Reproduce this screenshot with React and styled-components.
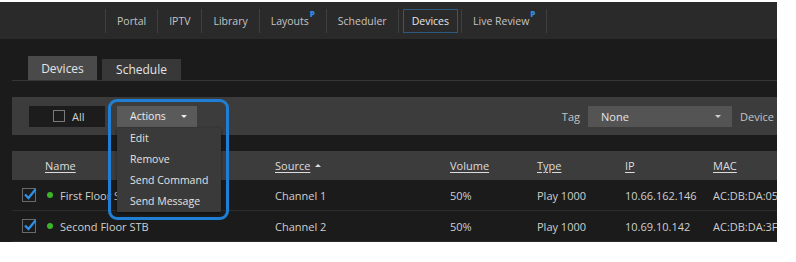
import styled, { createGlobalStyle } from 'styled-components'

const Global = createGlobalStyle`
  body {
    margin: 0;
    background: #ffffff;
    font-family: "Open Sans", "Liberation Sans", sans-serif;
  }
`

const Frame = styled.div`
  width: 777px;
  height: 240px;
  margin-top: 2px;
  background: #1b1b1b;
  overflow: hidden;
  color: #d0d0d0;
  font-size: 11px;
`

const NavBar = styled.div`
  height: 37px;
  background: #2a2a2a;
  display: flex;
  align-items: center;
  padding-left: 105px;
  font-size: 10.5px;
`

const NavItem = styled.div`
  height: 24px;
  display: flex;
  align-items: center;
  padding: 0 11px 0 11px;
  border-left: 1px solid #404040;
  color: ${p => (p.$active ? '#e6e6e6' : '#c4c4c4')};
  &:last-child {
    border-right: 1px solid #404040;
  }
`

const ActiveBox = styled.span`
  display: flex;
  align-items: center;
  height: 22px;
  padding: 0 8px;
  margin: 0 -8px 0 -7px;
  border: 1px solid #2f5a80;
`

const Sup = styled.sup`
  color: #2f8de4;
  font-size: 8px;
  font-weight: 800;
  margin-left: 1px;
  align-self: flex-start;
  margin-top: 1px;
  line-height: 8px;
`

const Content = styled.div`
  padding: 17px 0 0 12px;
`

const Tabs = styled.div`
  display: flex;
  align-items: flex-end;
  gap: 5px;
  height: 24px;
  padding-left: 16px;
  border-bottom: 1px solid #363636;
`

const Tab = styled.div`
  height: ${p => (p.$active ? 24 : 21)}px;
  width: ${p => p.$w}px;
  display: flex;
  align-items: center;
  justify-content: center;
  font-size: 12px;
  background: ${p => (p.$active ? '#4a4a4a' : '#383838')};
  color: #e4e4e4;
`

const Toolbar = styled.div`
  margin-top: 16px;
  height: 38px;
  background: #3c3c3c;
  display: flex;
  align-items: center;
  padding-left: 17px;
`

const AllBox = styled.div`
  width: 76px;
  height: 21px;
  background: #1c1c1c;
  display: flex;
  align-items: center;
  padding-left: 24px;
  box-sizing: border-box;
  gap: 7px;
`

const EmptyCheck = styled.span`
  width: 10px;
  height: 10px;
  border: 1px solid #7a7a7a;
`

const ActionsWrap = styled.div`
  position: relative;
  margin-left: 12px;
  font-size: 10.5px;
`

const ActionsButton = styled.div`
  width: 80px;
  height: 21px;
  background: #5a5a5a;
  color: #ececec;
  display: flex;
  align-items: center;
  padding-left: 13px;
  box-sizing: border-box;
  gap: 15px;
`

const Caret = styled.span`
  width: 0;
  height: 0;
  border-left: 3px solid transparent;
  border-right: 3px solid transparent;
  border-${p => (p.$up ? 'bottom' : 'top')}: 3px solid ${p => p.$color || '#eeeeee'};
`

const Menu = styled.div`
  position: absolute;
  top: 22px;
  left: 0;
  width: 104px;
  height: 84px;
  background: #3a3a3a;
  box-shadow: 0 1px 3px rgba(0, 0, 0, 0.5);
  z-index: 2;
`

const MenuItem = styled.div`
  height: 21px;
  display: flex;
  align-items: center;
  padding-left: 13px;
  color: #e2e2e2;
`

const Highlight = styled.div`
  position: absolute;
  left: -9px;
  top: -7px;
  width: 121px;
  height: 121px;
  box-sizing: border-box;
  border: 3px solid #1f7fd4;
  border-radius: 9px;
  z-index: 3;
  pointer-events: none;
`

const Spacer = styled.div`
  flex: 1;
`

const Label = styled.span`
  color: #c4c4c4;
  margin-right: 8px;
`

const Select = styled.div`
  width: 144px;
  height: 21px;
  background: #545454;
  display: flex;
  align-items: center;
  justify-content: space-between;
  padding: 0 11px 0 13px;
  box-sizing: border-box;
  color: #e4e4e4;
  margin-right: 8px;
`

const DeviceLabel = styled.span`
  color: #c4c4c4;
  white-space: nowrap;
  width: 37px;
  overflow: hidden;
`

const Table = styled.div`
  margin-top: 16px;
`

const Grid = styled.div`
  display: grid;
  grid-template-columns: 263px 175px 87px 88px 88px 1fr;
  align-items: center;
  box-sizing: border-box;
  height: ${p => p.$h}px;
  background: ${p => (p.$head ? '#3c3c3c' : '#1b1b1b')};
  border-bottom: ${p => (p.$head ? 'none' : '1px solid #2c2c2c')};
  white-space: nowrap;
  overflow: hidden;
`

const HeadCell = styled.div`
  color: #dcdcdc;
  padding-left: ${p => p.$pad || 0}px;
  display: flex;
  align-items: center;
  gap: 5px;
  & > u {
    text-underline-offset: 2px;
  }
`

const Cell = styled.div`
  color: #cfcfcf;
  display: flex;
  align-items: center;
  padding-left: ${p => p.$pad || 0}px;
`

const Check = styled.span`
  position: relative;
  width: 12px;
  height: 12px;
  border: 1px solid #6a6a6a;
  margin-right: 11px;
`

const Dot = styled.span`
  width: 6px;
  height: 6px;
  border-radius: 50%;
  background: #3cb428;
  margin-right: 7px;
`

const Tick = () => (
  <svg width="14" height="14" viewBox="0 0 14 14" style={{ position: 'absolute', left: 0, top: -2 }}>
    <path d="M2 7.5 L5.5 11 L12.5 2.5" fill="none" stroke="#2e8ee6" strokeWidth="2.4" />
  </svg>
)

const rows = [
  { name: 'First Floor STB', src: 'Channel 1', ip: '10.66.162.146', mac: 'AC:DB:DA:05' },
  { name: 'Second Floor STB', src: 'Channel 2', ip: '10.69.10.142', mac: 'AC:DB:DA:3F' },
]

export default function App() {
  return (
    <>
      <Global />
      <Frame>
        <NavBar>
          <NavItem>Portal</NavItem>
          <NavItem>IPTV</NavItem>
          <NavItem>Library</NavItem>
          <NavItem>Layouts<Sup>P</Sup></NavItem>
          <NavItem>Scheduler</NavItem>
          <NavItem $active><ActiveBox>Devices</ActiveBox></NavItem>
          <NavItem>Live Review<Sup>P</Sup></NavItem>
        </NavBar>
        <Content>
          <Tabs>
            <Tab $active $w={69}>Devices</Tab>
            <Tab $w={79}>Schedule</Tab>
          </Tabs>
          <Toolbar>
            <AllBox>
              <EmptyCheck />
              All
            </AllBox>
            <ActionsWrap>
              <ActionsButton>
                Actions
                <Caret />
              </ActionsButton>
              <Menu>
                <MenuItem>Edit</MenuItem>
                <MenuItem>Remove</MenuItem>
                <MenuItem>Send Command</MenuItem>
                <MenuItem>Send Message</MenuItem>
              </Menu>
              <Highlight />
            </ActionsWrap>
            <Spacer />
            <Label>Tag</Label>
            <Select>
              None
              <Caret $color="#cfcfcf" />
            </Select>
            <DeviceLabel>Device</DeviceLabel>
          </Toolbar>
          <Table>
            <Grid $head $h={29}>
              <HeadCell $pad={33}><u>Name</u></HeadCell>
              <HeadCell><u>Source</u><Caret $up $color="#dcdcdc" /></HeadCell>
              <HeadCell><u>Volume</u></HeadCell>
              <HeadCell><u>Type</u></HeadCell>
              <HeadCell><u>IP</u></HeadCell>
              <HeadCell><u>MAC</u></HeadCell>
            </Grid>
            {rows.map(r => (
              <Grid key={r.name} $h={31}>
                <Cell $pad={10}>
                  <Check><Tick /></Check>
                  <Dot />
                  {r.name}
                </Cell>
                <Cell>{r.src}</Cell>
                <Cell>50%</Cell>
                <Cell>Play 1000</Cell>
                <Cell>{r.ip}</Cell>
                <Cell>{r.mac}</Cell>
              </Grid>
            ))}
          </Table>
        </Content>
      </Frame>
    </>
  )
}
